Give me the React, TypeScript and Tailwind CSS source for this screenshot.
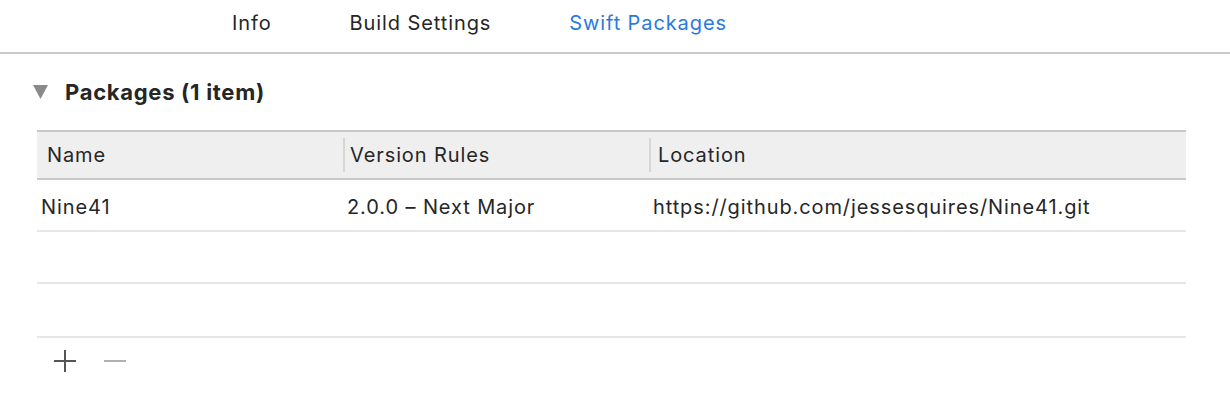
import { useState } from 'react';

const tabs = ['Info', 'Build Settings', 'Swift Packages'];

export default function App() {
  const [active] = useState('Swift Packages');

  return (
    <div
      className="w-[1230px] h-[410px] bg-white text-[#262626] overflow-hidden tracking-[0.9px]"
      style={{ fontFamily: 'Inter, "Liberation Sans", sans-serif' }}
    >
      {/* Tab bar */}
      <div className="h-[52px] flex items-center pl-[232px] gap-[78px] text-[20px] pb-[6px]">
        {tabs.map((t) => (
          <span key={t} className={t === active ? 'text-[#2a79e0]' : 'text-[#262626]'}>
            {t}
          </span>
        ))}
      </div>
      <div className="h-[2px] bg-[#c9c9c9]" />

      {/* Section header */}
      <div className="flex items-center h-[76px] pl-[33px]">
        <svg width="15" height="14" viewBox="0 0 15 14" className="mr-[17px]">
          <path d="M0 0 H15 L7.5 14 Z" fill="#8a8a8a" />
        </svg>
        <span className="text-[22px] font-bold tracking-[0.7px] text-[#262626]">Packages (1 item)</span>
      </div>

      {/* Table */}
      <div className="ml-[37px] w-[1149px]">
        <div className="flex h-[50px] bg-[#efefef] border-y-2 border-[#c8c8c8] text-[20px] items-center">
          <div className="w-[306px] pl-[10px]">Name</div>
          <div className="w-[306px] flex items-center h-[34px]">
            <div className="w-[2px] h-full bg-[#d6d6d6]" />
            <span className="pl-[5px]">Version Rules</span>
          </div>
          <div className="flex-1 flex items-center h-[34px]">
            <div className="w-[2px] h-full bg-[#d6d6d6]" />
            <span className="pl-[7px]">Location</span>
          </div>
        </div>
        <div className="flex h-[52px] border-b-2 border-[#e6e6e6] text-[20px] items-center pt-[3px]">
          <div className="w-[306px] pl-[4px]">Nine41</div>
          <div className="w-[306px] pl-[4px]">2.0.0 – Next Major</div>
          <div className="flex-1 pl-[4px]">https://github.com/jessesquires/Nine41.git</div>
        </div>
        <div className="h-[52px] border-b-2 border-[#e6e6e6]" />
        <div className="h-[54px] border-b-2 border-[#e6e6e6]" />
      </div>

      {/* Add / remove */}
      <div className="flex items-center ml-[54px] mt-[12px] gap-[28px]">
        <svg width="22" height="22" viewBox="0 0 22 22">
          <path d="M11 0 V22 M0 11 H22" stroke="#555555" strokeWidth="2" />
        </svg>
        <svg width="22" height="22" viewBox="0 0 22 22">
          <path d="M0 11 H22" stroke="#b0b0b0" strokeWidth="2" />
        </svg>
      </div>
    </div>
  );
}
